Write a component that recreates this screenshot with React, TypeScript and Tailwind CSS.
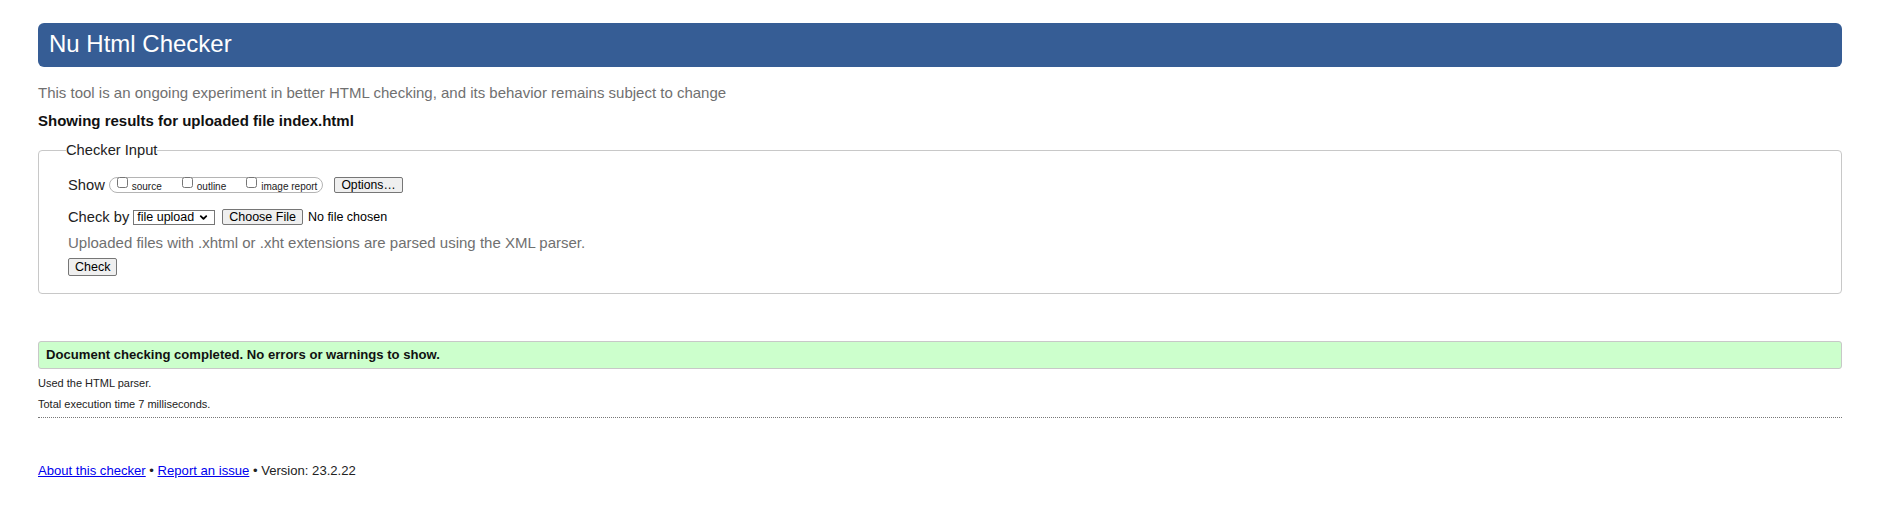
import { ChevronDown } from 'lucide-react';

const font = { fontFamily: '"Liberation Sans", Arial, sans-serif' };

const Checkbox = ({ label }: { label: string }) => (
  <label className="flex items-start h-full">
    <input type="checkbox" className="w-[11px] h-[11px] mt-[-1px] ml-[4px] mr-[4px] accent-[#333]" />
    <span className="text-[10px] leading-[14px] mt-[2px] text-[#222]">{label}</span>
  </label>
);

const App = () => {
  return (
    <div className="min-h-screen bg-white text-[#222] px-[38px] pt-[23px] pr-[35px]" style={font}>
      {/* Header */}
      <h1 className="h-[44px] bg-[#365d95] rounded-[6px] pl-[11px] text-white text-[24px] leading-[41px] font-normal">
        Nu Html Checker
      </h1>

      <p className="mt-[17px] text-[15px] leading-[18px] text-[#707070]">
        This tool is an ongoing experiment in better HTML checking, and its behavior remains subject to change
      </p>
      <p className="mt-[10px] text-[15px] leading-[18px] font-bold text-[#111]">
        Showing results for uploaded file index.html
      </p>

      {/* Checker input */}
      <fieldset className="mt-[11px] border border-[#c8c8c8] rounded-[4px] pl-[29px] pb-[17px]">
        <legend className="-ml-[2px] text-[14.7px] leading-[18px] text-[#222]">Checker Input</legend>

        <div className="mt-[17px] flex items-center h-[18px] text-[14.7px]">
          <span>Show</span>
          <div className="ml-[4px] flex items-start h-[16px] border border-[#b4b4b4] rounded-[8px] pl-[3px] pr-[5px] gap-[16px]">
            <Checkbox label="source" />
            <Checkbox label="outline" />
            <Checkbox label="image report" />
          </div>
          <button className="ml-[11px] h-[16px] px-[6px] bg-[#efefef] border border-[#767676] rounded-[2px] text-[12.2px] leading-[14px] text-black">
            Options…
          </button>
        </div>

        <div className="mt-[14px] flex items-center h-[18px] text-[14.7px]">
          <span>Check by</span>
          <div className="relative ml-[4px]">
            <select className="appearance-none block h-[15px] w-[82px] pl-[3px] border border-[#767676] bg-white text-[12.5px] leading-[13px] text-black">
              <option>file upload</option>
            </select>
            <ChevronDown className="absolute right-[6px] top-[2px] w-[11px] h-[11px] pointer-events-none text-black" strokeWidth={4} />
          </div>
          <button className="ml-[7px] h-[16px] px-[6px] bg-[#efefef] border border-[#767676] rounded-[2px] text-[12.5px] leading-[14px] text-black">
            Choose File
          </button>
          <span className="ml-[5px] text-[12.5px] text-black">No file chosen</span>
        </div>

        <p className="mt-[8px] text-[15px] leading-[18px] text-[#707070]">
          Uploaded files with .xhtml or .xht extensions are parsed using the XML parser.
        </p>

        <button className="mt-[6px] block h-[18px] px-[6px] bg-[#efefef] border border-[#767676] rounded-[2px] text-[12.5px] leading-[16px] text-black">
          Check
        </button>
      </fieldset>

      {/* Results */}
      <div className="mt-[47px] h-[28px] border border-[#c8c8c8] rounded-[3px] bg-[#ccffcc] pl-[7px] text-[13.1px] leading-[26px] font-bold text-[#111]">
        Document checking completed. No errors or warnings to show.
      </div>

      <div className="border-b border-dotted border-[#777] pb-[6px]">
        <p className="mt-[7px] text-[11px] leading-[14px] text-[#222]">Used the HTML parser.</p>
        <p className="mt-[7px] text-[11px] leading-[14px] text-[#222]">Total execution time 7 milliseconds.</p>
      </div>

      {/* Footer */}
      <p className="mt-[44px] text-[13.1px] leading-[18px] text-[#222]">
        <a href="#" className="text-[#0000ee] underline">About this checker</a>
        {' • '}
        <a href="#" className="text-[#0000ee] underline">Report an issue</a>
        {' • Version: 23.2.22'}
      </p>
    </div>
  );
};

export default App;
